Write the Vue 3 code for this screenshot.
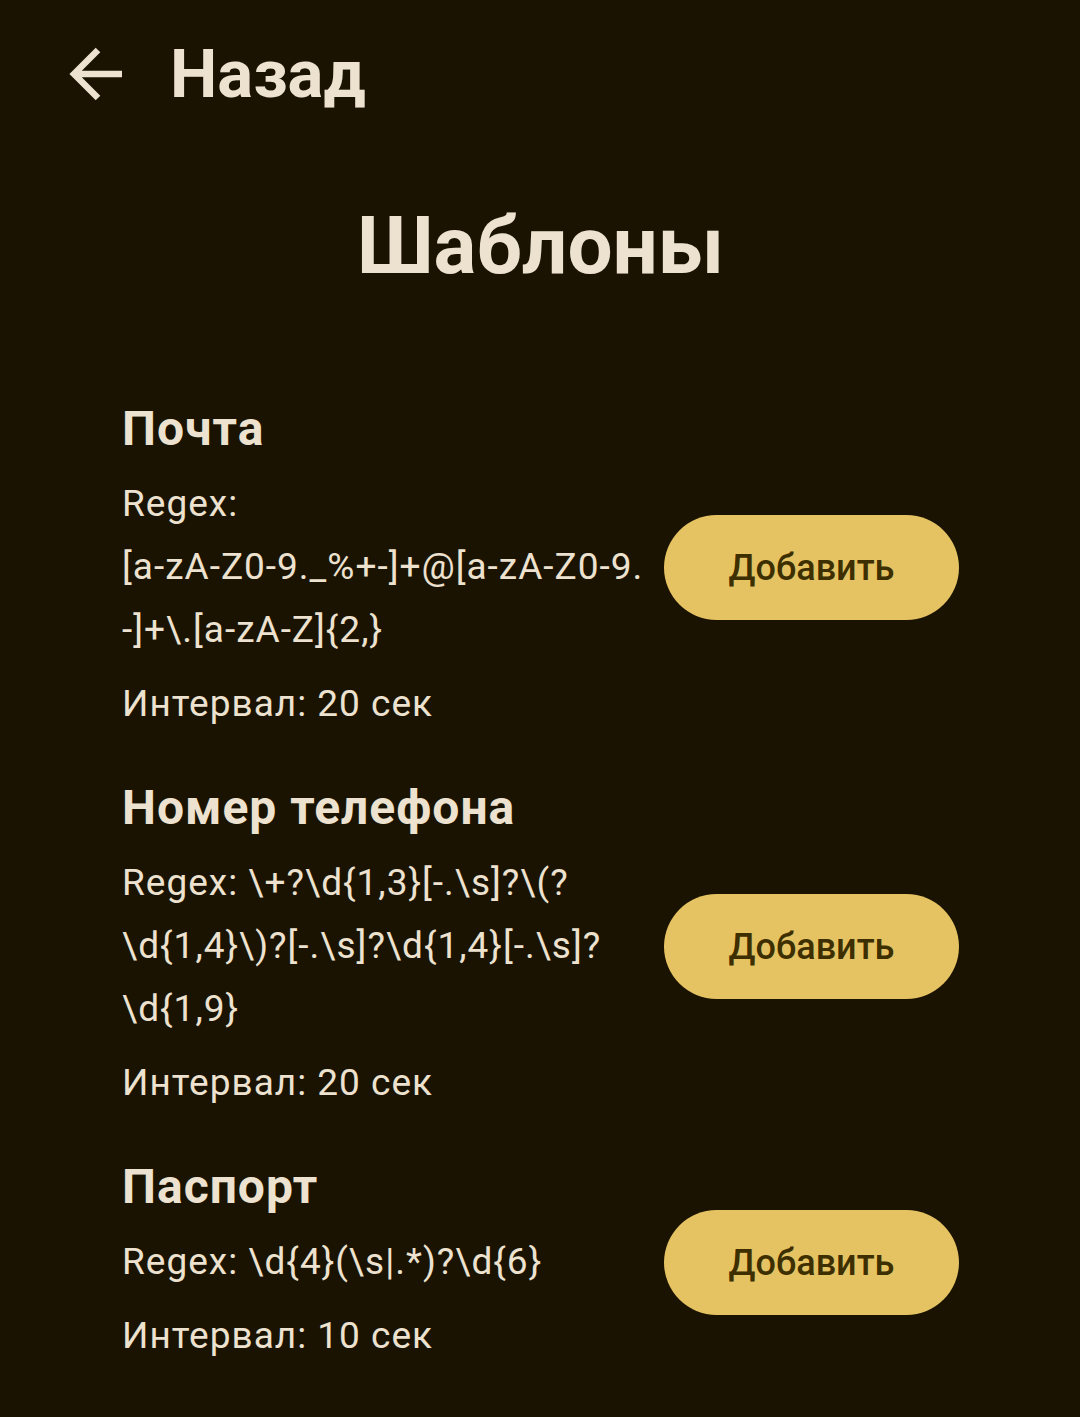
<script setup>
const patterns = [
  {
    title: 'Почта',
    regex: ['[a-zA-Z0-9._%+-]+@[a-zA-Z0-9.', '-]+\\.[a-zA-Z]{2,}'],
    breakBefore: true,
    interval: 20,
  },
  {
    title: 'Номер телефона',
    regex: ['\\+?\\d{1,3}[-.\\s]?\\(?', '\\d{1,4}\\)?[-.\\s]?\\d{1,4}[-.\\s]?', '\\d{1,9}'],
    interval: 20,
  },
  { title: 'Паспорт', regex: ['\\d{4}(\\s|.*)?\\d{6}'], interval: 10 },
]
</script>

<template>
  <div class="screen">
    <header class="bar">
      <button class="back" type="button">
        <svg class="arrow" viewBox="0 0 54 54" aria-hidden="true">
          <path d="M54 27H8M30 3L6 27L30 51" fill="none" stroke="currentColor" stroke-width="6.5" />
        </svg>
        <span>Назад</span>
      </button>
    </header>
    <main>
      <h1>Шаблоны</h1>
      <ul class="list">
        <li v-for="p in patterns" :key="p.title" class="item">
          <div class="info">
            <h2>{{ p.title }}</h2>
            <p>Regex: <br v-if="p.breakBefore" /><template v-for="(line, i) in p.regex" :key="i"><br v-if="i" />{{ line }}</template></p>
            <p>Интервал: {{ p.interval }} сек</p>
          </div>
          <button class="add" type="button">Добавить</button>
        </li>
      </ul>
    </main>
  </div>
</template>

<style>
body {
  margin: 0;
  background: #1a1302;
}
</style>

<style scoped>
.screen {
  min-height: 100vh;
  box-sizing: border-box;
  padding: 32px 121px 42px 122px;
  color: #ede1cf;
  font-family: Roboto, "Noto Sans", sans-serif;
}
.bar {
  display: flex;
  margin-left: -54px;
}
.back {
  display: flex;
  align-items: center;
  gap: 48px;
  padding: 0;
  border: 0;
  background: none;
  color: inherit;
  font: 700 67px/84px Roboto, "Noto Sans", sans-serif;
}
.arrow {
  width: 54px;
  height: 54px;
}
h1 {
  margin: 80px 0 101px;
  font-size: 80px;
  line-height: 100px;
  font-weight: 700;
  text-align: center;
}
.list {
  display: flex;
  flex-direction: column;
  gap: 38px;
  margin: 0;
  padding: 0;
  list-style: none;
}
.item {
  display: flex;
  align-items: center;
  justify-content: space-between;
  gap: 20px;
}
.info {
  display: flex;
  flex-direction: column;
  gap: 11px;
  padding-bottom: 3px;
}
h2 {
  margin: 0 0 1px;
  font-size: 48px;
  line-height: 63px;
  font-weight: 700;
  letter-spacing: 1px;
}
p {
  margin: 0;
  font-size: 37px;
  line-height: 63px;
  letter-spacing: 1px;
  white-space: nowrap;
}
.add {
  flex: none;
  width: 295px;
  height: 105px;
  padding: 0;
  border: 0;
  border-radius: 53px;
  background: #e5c363;
  color: #3d2f00;
  font: 500 36px/52px Roboto, "Noto Sans", sans-serif;
}
</style>
